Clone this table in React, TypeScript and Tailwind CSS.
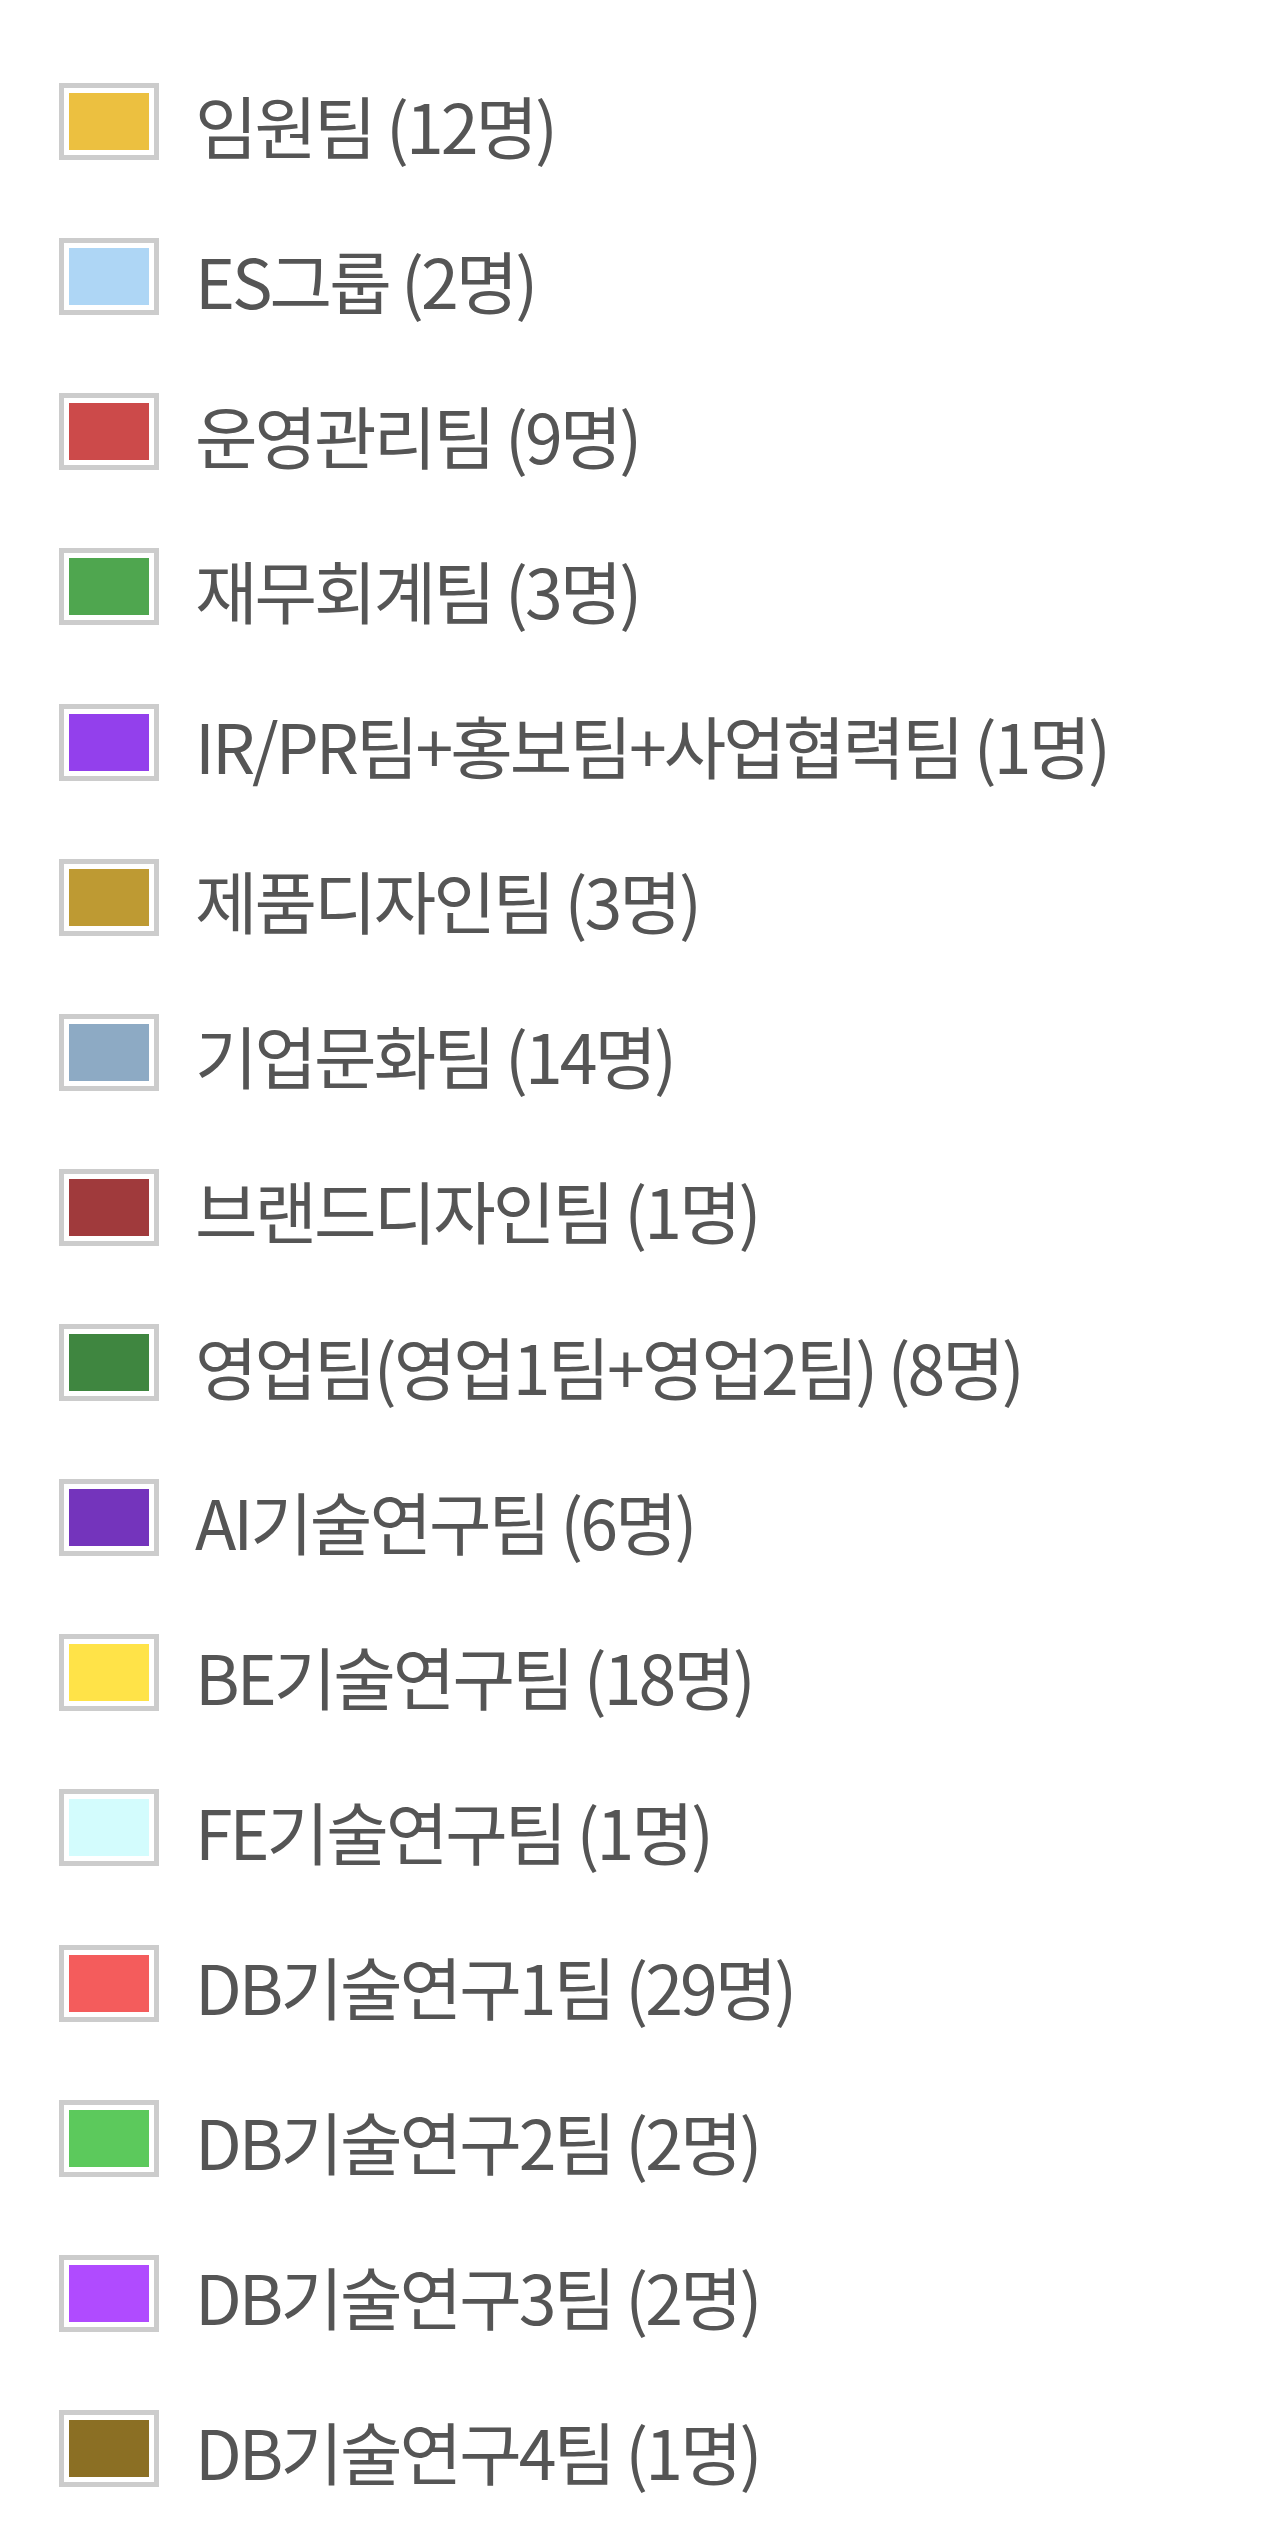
const teams = [
  { name: "임원팀 (12명)", color: "bg-[#ecc040]" },
  { name: "ES그룹 (2명)", color: "bg-[#aed6f5]" },
  { name: "운영관리팀 (9명)", color: "bg-[#cc4a4a]" },
  { name: "재무회계팀 (3명)", color: "bg-[#4fa64f]" },
  { name: "IR/PR팀+홍보팀+사업협력팀 (1명)", color: "bg-[#9340ec]" },
  { name: "제품디자인팀 (3명)", color: "bg-[#be9a33]" },
  { name: "기업문화팀 (14명)", color: "bg-[#8daac4]" },
  { name: "브랜드디자인팀 (1명)", color: "bg-[#a03a3c]" },
  { name: "영업팀(영업1팀+영업2팀) (8명)", color: "bg-[#3f8640]" },
  { name: "AI기술연구팀 (6명)", color: "bg-[#7434bc]" },
  { name: "BE기술연구팀 (18명)", color: "bg-[#ffe348]" },
  { name: "FE기술연구팀 (1명)", color: "bg-[#d3fcfd]" },
  { name: "DB기술연구1팀 (29명)", color: "bg-[#f45c5c]" },
  { name: "DB기술연구2팀 (2명)", color: "bg-[#5cc95c]" },
  { name: "DB기술연구3팀 (2명)", color: "bg-[#b04bff]" },
  { name: "DB기술연구4팀 (1명)", color: "bg-[#8b6f24]" },
];

export default function App() {
  return (
    <div className="min-h-[2544px] w-[1280px] bg-white pl-[59px] pt-[83px] font-['Noto_Sans_CJK_KR',sans-serif]">
      <ul className="flex flex-col gap-[78.13px]">
        {teams.map((t) => (
          <li key={t.name} className="flex h-[77px] items-center">
            <div className="h-[77px] w-[100px] shrink-0 border-[5px] border-[#cccccc] bg-white p-[5px]">
              <div className={`h-full w-full ${t.color}`} />
            </div>
            <span className="ml-[36px] mt-[6px] whitespace-nowrap text-[68px] leading-none tracking-[-3px] text-[#555555]">
              {t.name}
            </span>
          </li>
        ))}
      </ul>
    </div>
  );
}
